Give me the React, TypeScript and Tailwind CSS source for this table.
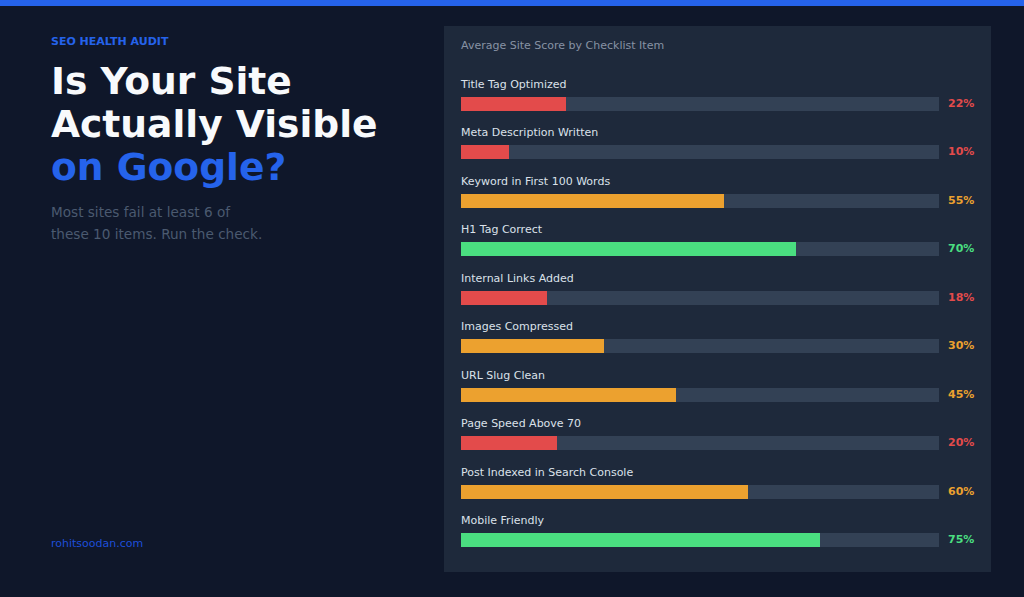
const items = [
  { label: "Title Tag Optimized", value: 22 },
  { label: "Meta Description Written", value: 10 },
  { label: "Keyword in First 100 Words", value: 55 },
  { label: "H1 Tag Correct", value: 70 },
  { label: "Internal Links Added", value: 18 },
  { label: "Images Compressed", value: 30 },
  { label: "URL Slug Clean", value: 45 },
  { label: "Page Speed Above 70", value: 20 },
  { label: "Post Indexed in Search Console", value: 60 },
  { label: "Mobile Friendly", value: 75 },
];

function tone(value: number) {
  if (value >= 70) return { bar: "bg-[#4ade80]", text: "text-[#4ade80]" };
  if (value >= 30) return { bar: "bg-[#eca12f]", text: "text-[#eca12f]" };
  return { bar: "bg-[#e34b4b]", text: "text-[#e34b4b]" };
}

function ScoreRow({ label, value }: { label: string; value: number }) {
  const t = tone(value);
  return (
    <div className="flex flex-col gap-[4px]">
      <div className="text-[11px] leading-[16px] text-[#dbe1ea]">{label}</div>
      <div className="flex items-center gap-[9px]">
        <div className="flex-1 h-[14px] bg-[#334155]">
          <div className={`h-full ${t.bar}`} style={{ width: `${value}%` }} />
        </div>
        <div className={`w-[26px] text-[11px] leading-[14px] font-bold ${t.text}`}>{value}%</div>
      </div>
    </div>
  );
}

export default function App() {
  return (
    <div
      className="w-[1024px] h-[597px] bg-[#0f172a] overflow-hidden"
      style={{ fontFamily: '"DejaVu Sans", Verdana, sans-serif' }}
    >
      <div className="h-[6px] bg-[#2563eb]" />

      <div className="flex pl-[51px] pt-[20px]">
        <div className="w-[393px] h-[546px] flex flex-col pt-[8px] pb-[20px]">
          <div className="text-[11px] leading-[16px] font-bold text-[#2563eb]">SEO HEALTH AUDIT</div>
          <h1 className="mt-[10px] text-[37.6px] leading-[43px] font-bold text-[#f8fafc]">
            Is Your Site
            <br />
            Actually Visible
            <br />
            <span className="text-[#2563eb]">on Google?</span>
          </h1>
          <p className="mt-[12px] max-w-[220px] text-[13.6px] leading-[22px] text-[#4b5a70]">
            Most sites fail at least 6 of these 10 items. Run the check.
          </p>
          <div className="mt-auto text-[11px] leading-[16px] text-[#1d4ed8]">rohitsoodan.com</div>
        </div>

        <div className="w-[547px] h-[546px] bg-[#1e293b] pt-[12px] px-[17px] pb-[25px] flex flex-col">
          <div className="text-[11px] leading-[16px] text-[#8792a4]">Average Site Score by Checklist Item</div>
          <div className="mt-[23px] flex-1 flex flex-col justify-between">
            {items.map((it) => (
              <ScoreRow key={it.label} label={it.label} value={it.value} />
            ))}
          </div>
        </div>
      </div>
    </div>
  );
}
